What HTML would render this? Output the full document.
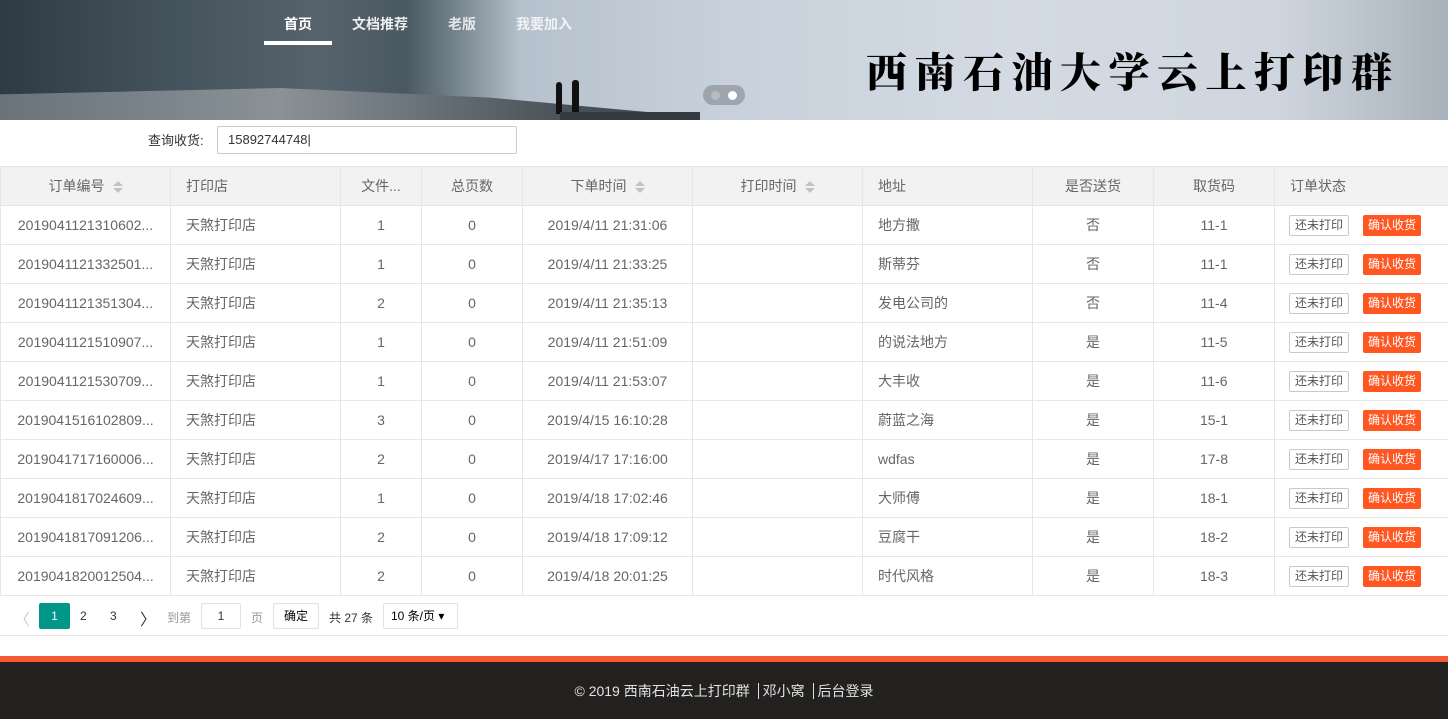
<!DOCTYPE html>
<html><head><meta charset="utf-8"><style>
*{margin:0;padding:0;box-sizing:border-box}
body{width:1448px;height:719px;overflow:hidden;background:#fff;font-family:"Liberation Sans","Noto Sans CJK SC",sans-serif;font-size:14px;color:#666;position:relative}
.banner{position:absolute;left:0;top:0;width:1448px;height:120px;background:linear-gradient(90deg,#2f3b44 0%,#45535d 12%,#56636c 22%,#4a5862 28%,#6f7d87 31%,#b5c1cc 36%,#c8d1db 50%,#d3dae3 70%,#cfd6df 88%,#a9b2bb 100%);overflow:hidden}
.ground{position:absolute;left:0;top:88px;width:700px;height:32px;background:linear-gradient(90deg,#6a737a,#8a9298 40%,#4b535a 80%,#3a4248);clip-path:polygon(0 20%,40% 0,70% 30%,100% 90%,100% 100%,0 100%)}
.nav{position:absolute;top:14px;color:#fff;font-size:14px;font-weight:bold}
.navline{position:absolute;left:264px;top:41px;width:68px;height:4px;background:#fff}
.title{position:absolute;left:866px;top:40px;font-family:"Noto Serif CJK SC",serif;font-weight:900;font-size:41px;letter-spacing:7.5px;color:#000}
.dots{position:absolute;left:703px;top:85px;width:42px;height:20px;border-radius:10px;background:rgba(120,130,140,.55)}
.dots i{position:absolute;top:6px;width:9px;height:9px;border-radius:50%;background:#bbb}
.q{position:absolute;left:148px;top:130px;color:#333;font-size:13px}
.inp{position:absolute;left:217px;top:126px;width:300px;height:28px;border:1px solid #ccc;border-radius:2px;padding-left:10px;line-height:26px;color:#333;font-size:13px}
table{position:absolute;left:0;top:166px;width:1448px;border-collapse:collapse;table-layout:fixed}
td,th{border:1px solid #e6e6e6;height:39px;font-weight:normal;white-space:nowrap;overflow:hidden;padding:0 15px;font-size:14px}
th{background:#f2f2f2;color:#666}
.c{text-align:center}.l{text-align:left}
.s{display:inline-block;width:10px;height:12px;vertical-align:middle;margin-left:8px;position:relative}
.s:before,.s:after{content:"";position:absolute;left:0;border-left:5px solid transparent;border-right:5px solid transparent}
.s:before{top:0;border-bottom:5px solid #c2c2c2}.s:after{bottom:0;border-top:5px solid #c2c2c2}
.b1{display:inline-block;border:1px solid #c9c9c9;height:21px;line-height:19px;padding:0 5px;color:#555;font-size:12px;border-radius:2px;margin-left:-1px}
.b2{display:inline-block;background:#ff5722;height:21px;line-height:21px;padding:0 5px;color:#fff;font-size:12px;border-radius:2px;margin-left:14px}
.pg{position:absolute;left:0;top:596px;width:1448px;height:40px;border-bottom:1px solid #e6e6e6;font-size:12px;color:#333}
.pg span{position:absolute;top:13px}
.box{position:absolute;top:7px;height:26px;border:1px solid #e2e2e2;border-radius:2px;text-align:center;line-height:24px}
.foot1{position:absolute;left:0;top:656px;width:1448px;height:6px;background:#f55a33}
.foot2{position:absolute;left:0;top:662px;width:1448px;height:57px;background:#232120;color:#e2e2e2;text-align:center;line-height:58px;font-size:14px;padding-left:0}
.foot2 b{font-weight:normal;border-left:1px solid #ddd;padding-left:4px;margin-left:4px}
</style></head><body>
<div class="banner">
<div class="ground"></div>
<div style="position:absolute;left:556px;top:82px;width:6px;height:32px;background:#111;border-radius:3px 3px 0 0"></div>
<div style="position:absolute;left:572px;top:80px;width:7px;height:34px;background:#111;border-radius:3px 3px 0 0"></div>
<div style="position:absolute;left:560px;top:112px;width:140px;height:8px;background:#333b42"></div>
<div class="nav" style="left:284px">首页</div>
<div class="nav" style="left:352px;opacity:.9">文档推荐</div>
<div class="nav" style="left:448px;opacity:.8">老版</div>
<div class="nav" style="left:516px;opacity:.8">我要加入</div>
<div class="navline"></div>
<div class="title">西南石油大学云上打印群</div>
<div class="dots"><i style="left:8px"></i><i style="left:25px;background:#fff"></i></div>
</div>
<div class="q">查询收货:</div>
<div class="inp">15892744748|</div>
<table>
<colgroup><col style="width:170px"><col style="width:170px"><col style="width:81px"><col style="width:101px"><col style="width:170px"><col style="width:170px"><col style="width:170px"><col style="width:121px"><col style="width:121px"><col style="width:174px"></colgroup>
<tr><th class="c">订单编号<i class="s"></i></th><th class="l">打印店</th><th class="c">文件...</th><th class="c">总页数</th><th class="c">下单时间<i class="s"></i></th><th class="c">打印时间<i class="s"></i></th><th class="l">地址</th><th class="c">是否送货</th><th class="c">取货码</th><th class="l">订单状态</th></tr>
<tr><td class="c">2019041121310602...</td><td>天煞打印店</td><td class="c">1</td><td class="c">0</td><td class="c">2019/4/11 21:31:06</td><td></td><td>地方撒</td><td class="c">否</td><td class="c">11-1</td><td><span class="b1">还未打印</span><span class="b2">确认收货</span></td></tr>
<tr><td class="c">2019041121332501...</td><td>天煞打印店</td><td class="c">1</td><td class="c">0</td><td class="c">2019/4/11 21:33:25</td><td></td><td>斯蒂芬</td><td class="c">否</td><td class="c">11-1</td><td><span class="b1">还未打印</span><span class="b2">确认收货</span></td></tr>
<tr><td class="c">2019041121351304...</td><td>天煞打印店</td><td class="c">2</td><td class="c">0</td><td class="c">2019/4/11 21:35:13</td><td></td><td>发电公司的</td><td class="c">否</td><td class="c">11-4</td><td><span class="b1">还未打印</span><span class="b2">确认收货</span></td></tr>
<tr><td class="c">2019041121510907...</td><td>天煞打印店</td><td class="c">1</td><td class="c">0</td><td class="c">2019/4/11 21:51:09</td><td></td><td>的说法地方</td><td class="c">是</td><td class="c">11-5</td><td><span class="b1">还未打印</span><span class="b2">确认收货</span></td></tr>
<tr><td class="c">2019041121530709...</td><td>天煞打印店</td><td class="c">1</td><td class="c">0</td><td class="c">2019/4/11 21:53:07</td><td></td><td>大丰收</td><td class="c">是</td><td class="c">11-6</td><td><span class="b1">还未打印</span><span class="b2">确认收货</span></td></tr>
<tr><td class="c">2019041516102809...</td><td>天煞打印店</td><td class="c">3</td><td class="c">0</td><td class="c">2019/4/15 16:10:28</td><td></td><td>蔚蓝之海</td><td class="c">是</td><td class="c">15-1</td><td><span class="b1">还未打印</span><span class="b2">确认收货</span></td></tr>
<tr><td class="c">2019041717160006...</td><td>天煞打印店</td><td class="c">2</td><td class="c">0</td><td class="c">2019/4/17 17:16:00</td><td></td><td>wdfas</td><td class="c">是</td><td class="c">17-8</td><td><span class="b1">还未打印</span><span class="b2">确认收货</span></td></tr>
<tr><td class="c">2019041817024609...</td><td>天煞打印店</td><td class="c">1</td><td class="c">0</td><td class="c">2019/4/18 17:02:46</td><td></td><td>大师傅</td><td class="c">是</td><td class="c">18-1</td><td><span class="b1">还未打印</span><span class="b2">确认收货</span></td></tr>
<tr><td class="c">2019041817091206...</td><td>天煞打印店</td><td class="c">2</td><td class="c">0</td><td class="c">2019/4/18 17:09:12</td><td></td><td>豆腐干</td><td class="c">是</td><td class="c">18-2</td><td><span class="b1">还未打印</span><span class="b2">确认收货</span></td></tr>
<tr><td class="c">2019041820012504...</td><td>天煞打印店</td><td class="c">2</td><td class="c">0</td><td class="c">2019/4/18 20:01:25</td><td></td><td>时代风格</td><td class="c">是</td><td class="c">18-3</td><td><span class="b1">还未打印</span><span class="b2">确认收货</span></td></tr>
</table>
<div class="pg">
<span style="left:14px;color:#ccc;font-size:16px;top:10px">〈</span>
<div style="position:absolute;left:39px;top:7px;width:31px;height:26px;background:#009688;color:#fff;text-align:center;line-height:26px;border-radius:2px">1</div>
<span style="left:80px">2</span><span style="left:110px">3</span>
<span style="left:140px;font-size:16px;top:10px">〉</span>
<span style="left:167px;color:#999">到第</span>
<div class="box" style="left:201px;width:40px">1</div>
<span style="left:251px;color:#999">页</span>
<div class="box" style="left:273px;width:46px;color:#000">确定</div>
<span style="left:329px">共 27 条</span>
<div class="box" style="left:383px;width:75px;text-align:left;padding-left:7px;color:#000">10 条/页 ▾</div>
</div>
<div class="foot1"></div>
<div class="foot2">© 2019 西南石油云上打印群 <b>邓小窝</b> <b>后台登录</b></div>
</body></html>
